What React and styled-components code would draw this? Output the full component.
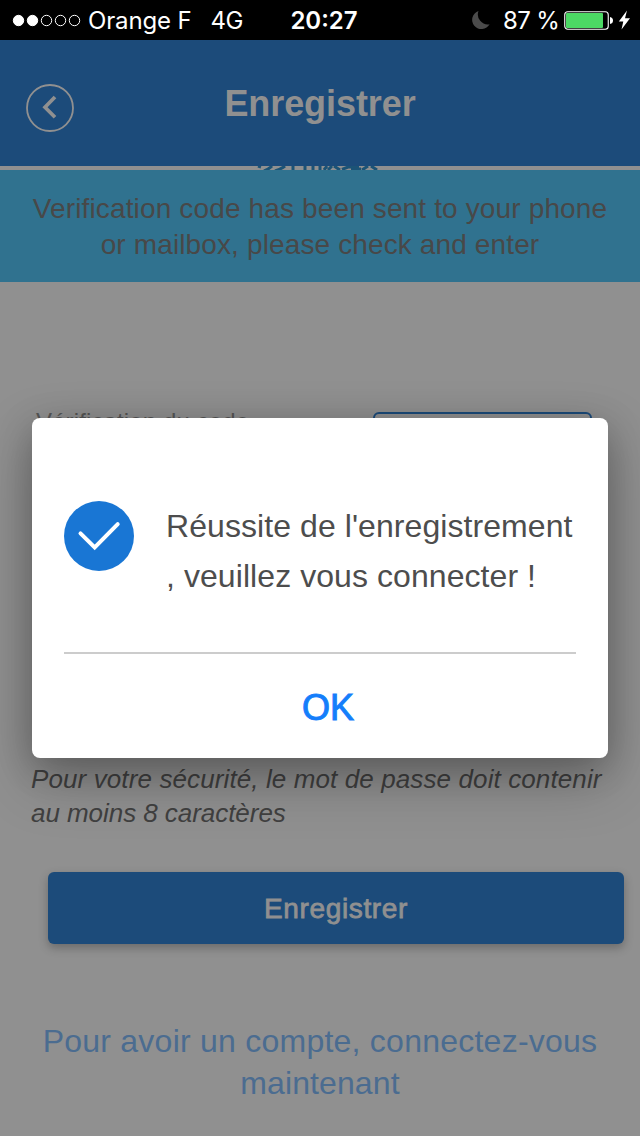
import React from "react";
import styled, { createGlobalStyle } from "styled-components";

const Global = createGlobalStyle`
  *{box-sizing:border-box}
  body{margin:0;background:#909090;font-family:"Liberation Sans",Arial,sans-serif}
  h1,p{margin:0}
  button{font-family:inherit;padding:0;border:0;background:none}
`;
const Screen = styled.div`
  position:relative;width:640px;height:1136px;overflow:hidden;background:#909090;
  display:flex;flex-direction:column;
`;
const StatusBar = styled.div`
  height:40px;flex:none;background:#000;color:#fff;display:grid;
  grid-template-columns:1fr auto 1fr;align-items:center;padding:0 9px 0 12px;
  font-family:Inter,sans-serif;font-size:24px;line-height:38px;white-space:pre;
`;
const StatusGroup = styled.div`
  display:flex;align-items:center;height:40px;
  justify-content:${(p) => (p.$end ? "flex-end" : "flex-start")};
`;
const StatusText = styled.span`
  padding-top:2px;
  letter-spacing:${(p) => p.$spacing || "0"};
  font-weight:${(p) => p.$weight || 400};
  margin-left:${(p) => p.$left || 0}px;
  margin-right:${(p) => p.$right || 0}px;
`;
const Header = styled.header`
  height:126px;flex:none;background:#1c4b7a;display:grid;
  grid-template-columns:48px 1fr 48px;align-items:center;padding:2px 26px 0;
`;
const BackButton = styled.button`width:48px;height:48px;margin-top:8px;display:block;`;
const Title = styled.h1`
  text-align:center;color:#909090;font-size:36px;line-height:42px;font-weight:700;
  letter-spacing:-.08px;
`;
const LogoStrip = styled.div`height:4px;flex:none;overflow:hidden;padding-left:256px;svg{display:block}`;
const Banner = styled.div`
  height:112px;flex:none;background:#30728f;color:#484848;padding-top:21px;
  display:flex;flex-direction:column;align-items:center;
  font-size:28px;line-height:36px;white-space:nowrap;
`;
const Line = styled.span`display:block;letter-spacing:${(p) => p.$spacing || "0"};`;
const CodeRow = styled.div`
  height:68px;margin-top:130px;flex:none;display:flex;justify-content:space-between;padding:0 48px 0 36px;
`;
const FieldLabel = styled.span`color:#565656;font-size:24px;line-height:28px;margin-top:-4px;letter-spacing:.12px;`;
const CodeButton = styled.button`width:219px;height:68px;border:2px solid #1c4b7a;border-radius:6px;`;
const Hint = styled.p`
  margin-top:282px;flex:none;padding-left:31px;color:#404040;font-style:italic;font-size:26px;line-height:34px;white-space:nowrap;
`;
const Submit = styled.button`
  flex:none;width:576px;height:72px;margin:42px 0 0 48px;padding-top:1px;border-radius:6px;background:#1c4b7a;color:#909090;
  font-size:28px;line-height:71px;-webkit-text-stroke:.8px #909090;letter-spacing:.65px;
  box-shadow:0 4px 10px rgba(0,0,0,.26);
`;
const LoginLink = styled.p`
  flex:none;margin-top:76px;display:flex;flex-direction:column;align-items:center;color:#4b6c90;
  font-size:32px;line-height:42px;white-space:nowrap;
`;
const Dialog = styled.div`
  position:absolute;left:32px;top:418px;width:576px;height:340px;background:#fff;border-radius:8px;
  padding:0 32px;box-shadow:0 22px 56px rgba(0,0,0,.26),0 8px 36px rgba(0,0,0,.2);
  display:flex;flex-direction:column;
`;
const Message = styled.div`
  height:236px;flex:none;display:flex;gap:32px;padding-top:83px;border-bottom:2px solid #ccc;
  color:#4d4d4d;font-size:32px;line-height:50px;white-space:nowrap;
  svg{flex:none;display:block}
`;
const Confirm = styled.button`
  height:104px;padding:4px 0 0 16px;color:#147efb;font-size:36px;-webkit-text-stroke:1px #147efb;
`;

const Signal = () => (
  <svg width="70" height="40" viewBox="0 0 70 40" fill="none" stroke="#fff" strokeWidth="1">
    <circle cx="6.5" cy="20.5" r="5.2" fill="#fff" />
    <circle cx="20.5" cy="20.5" r="5.2" fill="#fff" />
    <circle cx="34.5" cy="20.5" r="5.2" />
    <circle cx="48.5" cy="20.5" r="5.2" />
    <circle cx="62.5" cy="20.5" r="5.2" />
  </svg>
);
const Moon = () => (
  <svg width="20" height="40" viewBox="0 0 20 40">
    <path d="M7.5 11A9.3 9.3 0 1 0 18.6 24.3A10 10 0 0 1 7.5 11Z" fill="#4b4b4b" />
  </svg>
);
const Battery = () => (
  <svg width="50" height="40" viewBox="0 0 50 40">
    <rect x=".75" y="11.75" width="43.5" height="17.5" rx="3" fill="none" stroke="#fff" strokeWidth="1.1" />
    <rect x="2" y="13" width="37" height="15" rx="1" fill="#4cd964" />
    <path d="M46 17q3 .5 3 3.5t-3 3.5z" fill="#fff" />
  </svg>
);
const Bolt = () => (
  <svg width="13" height="40" viewBox="0 0 13 40">
    <path d="M9 10.5L.8 21.5H5.3L3.5 29.5L12 18.3H7Z" fill="#fff" />
  </svg>
);
const BackIcon = () => (
  <svg width="48" height="48" viewBox="0 0 48 48" fill="none" stroke="#909090">
    <circle cx="24" cy="24" r="23" strokeWidth="1.8" />
    <path d="M29 13L19 23.2L29 33.3" strokeWidth="3.7" />
  </svg>
);
const Logo = () => (
  <svg width="124" height="4" viewBox="0 0 124 4" fill="none" stroke="#1b5376" strokeWidth="3">
    <path d="M2 0L5 1M16 0Q13 3 8 5M29 0Q25 3 19 5M37 0V4M49 0V4M57 0V4M64 0V4M71 0L68 4M76 0L72 4M78 0L84 4M86 3.5L92 1H103M95 3H105M112 0L106 4M115 0L121 4" />
  </svg>
);
const SuccessIcon = () => (
  <svg width="70" height="70" viewBox="0 0 70 70">
    <circle cx="35" cy="35" r="35" fill="#1976d4" />
    <path d="M16.5 32.3L30.7 46.5L53.7 23.2" fill="none" stroke="#fff" strokeWidth="4" strokeLinecap="round" />
  </svg>
);

export default function App() {
  return (
    <Screen>
      <Global />
      <StatusBar>
        <StatusGroup>
          <Signal />
          <StatusText $left={6} $spacing="-.15px">Orange F</StatusText>
          <StatusText $left={19} $spacing="-.4px">4G</StatusText>
        </StatusGroup>
        <StatusText $weight={600} $left={5}>20:27</StatusText>
        <StatusGroup $end>
          <Moon />
          <StatusText $left={12} $right={5} $spacing="-.7px">87 %</StatusText>
          <Battery />
          <StatusText $left={4} />
          <Bolt />
        </StatusGroup>
      </StatusBar>
      <Header>
        <BackButton aria-label="Retour"><BackIcon /></BackButton>
        <Title>Enregistrer</Title>
      </Header>
      <LogoStrip><Logo /></LogoStrip>
      <Banner>
        <Line $spacing=".14px">Verification code has been sent to your phone</Line>
        <Line $spacing=".13px">or mailbox, please check and enter</Line>
      </Banner>
      <CodeRow>
        <FieldLabel>Vérification du code</FieldLabel>
        <CodeButton aria-label="Code" />
      </CodeRow>
      <Hint>
        <Line $spacing=".11px">Pour votre sécurité, le mot de passe doit contenir</Line>
        <Line $spacing="-.05px">au moins 8 caractères</Line>
      </Hint>
      <Submit>Enregistrer</Submit>
      <LoginLink>
        <Line $spacing=".24px">Pour avoir un compte, connectez-vous</Line>
        <Line $spacing=".1px">maintenant</Line>
      </LoginLink>
      <Dialog role="dialog">
        <Message>
          <SuccessIcon />
          <p>
            <Line $spacing=".07px">Réussite de l'enregistrement</Line>
            <Line $spacing=".07px">, veuillez vous connecter !</Line>
          </p>
        </Message>
        <Confirm>OK</Confirm>
      </Dialog>
    </Screen>
  );
}
